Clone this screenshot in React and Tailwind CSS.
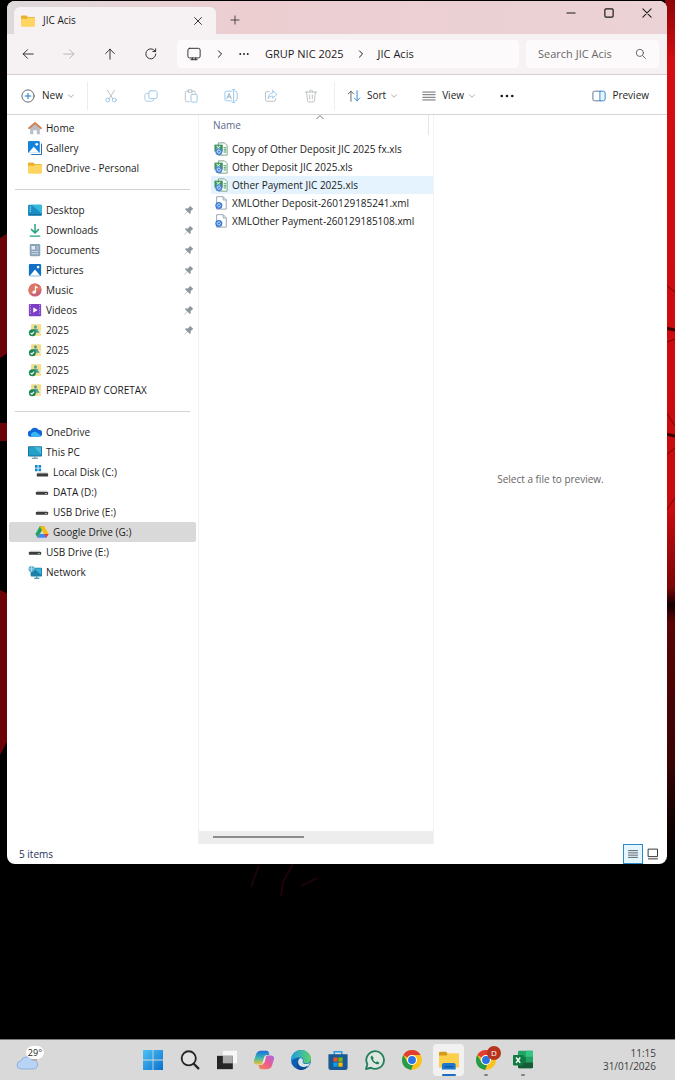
import React, { useState } from "react";

/* ---------- small stroke icons ---------- */

function Stroke({ children, size = "size-3.5", width = "1", className = "" }) {
  return (
    <svg className={`${size} shrink-0 ${className}`} viewBox="0 0 16 16" fill="none" stroke="currentColor" strokeWidth={width} strokeLinecap="round" strokeLinejoin="round">
      {children}
    </svg>
  );
}

const BackIcon = () => <Stroke><path d="M14 8H2.5M7.5 3L2.5 8l5 5" /></Stroke>;
const ForwardIcon = () => <Stroke><path d="M2 8h11.5M8.5 3l5 5-5 5" /></Stroke>;
const UpIcon = () => <Stroke><path d="M8 14V2.5M3 7.5l5-5 5 5" /></Stroke>;
const RefreshIcon = () => <Stroke><path d="M13.5 8A5.7 5.7 0 1 1 11.5 3.5L13 5M13.3 2v3.2h-3.2" /></Stroke>;
const SearchIcon = () => <Stroke size="size-3" width="1.3"><circle cx="6.5" cy="6.5" r="4.8" /><path d="M10.2 10.2L14 14" /></Stroke>;
const CloseIcon = ({ size }) => <Stroke size={size} width="1.4"><path d="M2.5 2.5l11 11M13.5 2.5l-11 11" /></Stroke>;
const PlusIcon = () => <Stroke size="size-2.5" width="1.2"><path d="M8 1.500v13M1.500 8h13" /></Stroke>;
const MinimizeIcon = () => <Stroke size="size-3" width="1.4"><path d="M2.5 8h11" /></Stroke>;
const MaximizeIcon = () => <Stroke size="size-3" width="1.6"><rect x="2.5" y="2.5" width="11" height="11" rx="1.5" /></Stroke>;
const ChevronRight = () => <Stroke size="size-2.5" width="1.6"><path d="M5.5 3l5 5-5 5" /></Stroke>;
const ChevronDown = () => <Stroke size="size-2" width="1.6" className="text-[#9a9a9a]"><path d="M3 5.5l5 5 5-5" /></Stroke>;
const MonitorIcon = () => <Stroke><rect x="1" y="1.5" width="14" height="11" rx="2" /><path d="M6 12.5v2M10 12.5v2M4.5 14.5h7" /></Stroke>;

function Dots({ size = "size-3.5" }) {
  return (
    <svg className={`${size} shrink-0`} viewBox="0 0 16 16" fill="currentColor">
      <circle cx="2" cy="8" r="1.5" />
      <circle cx="8" cy="8" r="1.5" />
      <circle cx="14" cy="8" r="1.5" />
    </svg>
  );
}

const NewIcon = () => (
  <Stroke>
    <circle cx="8" cy="8" r="7" stroke="#4d5660" />
    <path d="M8 4.8v6.4M4.8 8h6.4" stroke="#1f7fd0" strokeWidth="1.2" />
  </Stroke>
);

const CutIcon = () => (
  <Stroke>
    <path d="M4 1.5l6 9.5M12 1.5L6 11" stroke="#b5b9bd" />
    <circle cx="4.2" cy="12.6" r="2.2" stroke="#8fc1ea" />
    <circle cx="11.8" cy="12.6" r="2.2" stroke="#8fc1ea" />
  </Stroke>
);

const CopyIcon = () => (
  <Stroke>
    <rect x="5.5" y="2" width="9.5" height="9" rx="2" stroke="#8fc1ea" />
    <path d="M5.5 5H3a2 2 0 0 0-2 2v5a2 2 0 0 0 2 2h6a2 2 0 0 0 2-2v-1" stroke="#a9c3da" />
  </Stroke>
);

const PasteIcon = () => (
  <Stroke>
    <path d="M6 14.5H3A1.5 1.5 0 0 1 1.5 13V4A1.5 1.5 0 0 1 3 2.5h2M9 2.5h2.5A1.5 1.5 0 0 1 13 4v1M5 1h4.2v2.800H5z" stroke="#b5b9bd" />
    <rect x="8" y="6" width="7" height="9" rx="1.3" stroke="#8fc1ea" />
  </Stroke>
);

const RenameIcon = () => (
  <Stroke>
    <path d="M9 2.5H3a2 2 0 0 0-2 2v7a2 2 0 0 0 2 2h6M13 2.5a2 2 0 0 1 2 2v7a2 2 0 0 1-2 2" stroke="#8fc1ea" />
    <path d="M11 1v14M9.5 .8h3M9.5 15.2h3" stroke="#8fc1ea" />
    <path d="M3.3 11L5.800 5l2.5 6M4.2 9h3.2" stroke="#8fa9c0" />
  </Stroke>
);

const ShareIcon = () => (
  <Stroke>
    <path d="M6 3H3.5A1.8 1.8 0 0 0 1.7 4.8v7.4A1.8 1.8 0 0 0 3.5 14h8a1.8 1.8 0 0 0 1.8-1.8V11" stroke="#b5b9bd" />
    <path d="M10 1.8l4.8 4.4L10 10.5V8C7.5 8 5.8 9 4.8 11c0-3.5 2-6.5 5.2-6.7z" stroke="#8fc1ea" />
  </Stroke>
);

const TrashIcon = () => (
  <Stroke className="text-[#b5b9bd]">
    <path d="M1.5 3.5h13M6 3.2a2 2 0 0 1 4 0M3 3.5l1 10a1.5 1.5 0 0 0 1.5 1.3h5A1.5 1.5 0 0 0 12 13.5l1-10M6.5 6.8v4.7M9.5 6.8v4.7" />
  </Stroke>
);

const SortIcon = () => (
  <Stroke>
    <path d="M4.5 14V2.5M1.3 5.7l3.2-3.2 3.2 3.2" stroke="#4d5660" />
    <path d="M11.5 2v11.5M8.3 10.3l3.2 3.2 3.2-3.2" stroke="#1f7fd0" />
  </Stroke>
);

const ViewIcon = () => <Stroke><path d="M1 3.5h14M1 6.5h14M1 9.5h14M1 12.5h14" stroke="#555" /></Stroke>;

const PreviewIcon = () => (
  <Stroke>
    <path d="M9.5 2.5H3a2 2 0 0 0-2 2v7a2 2 0 0 0 2 2h6.5" stroke="#4d6f8c" />
    <path d="M9.5 2.5H13a2 2 0 0 1 2 2v7a2 2 0 0 1-2 2H9.5z" stroke="#1f7fd0" fill="#eaf6ff" />
  </Stroke>
);

/* ---------- coloured sidebar icons ---------- */

function Glyph({ children, size = "size-3.5" }) {
  return <svg className={`${size} shrink-0`} viewBox="0 0 16 16">{children}</svg>;
}

const FolderIcon = () => (
  <Glyph>
    <path d="M0 3a1.3 1.3 0 0 1 1.3-1.3H6L7.800 3.5h6.9A1.3 1.3 0 0 1 16 4.800V8H0z" fill="#e8b02c" />
    <path d="M0 5.500h6.500L8 4.300h6.700A1.3 1.3 0 0 1 16 5.600v7.600a1.3 1.3 0 0 1-1.3 1.3H1.3A1.3 1.3 0 0 1 0 13.200z" fill="#ffd561" />
  </Glyph>
);

const HomeIcon = () => (
  <Glyph>
    <path d="M2.5 7L8 2.5 13.5 7v8H10v-4.5H6V15H2.5z" fill="#b9bec6" />
    <path d="M1.200 8.2L8 2.2l6.800 6" fill="none" stroke="#cf8458" strokeWidth="2.2" strokeLinecap="round" strokeLinejoin="round" />
  </Glyph>
);

const GalleryIcon = () => (
  <Glyph>
    <path d="M3 3h12.5v12.5H3z" fill="#0a4f92" />
    <path d="M2 2h13v13H2z" fill="#fff" />
    <path d="M4 15.500h11.500V3" fill="none" stroke="#0f62ad" />
    <rect width="13.500" height="13.500" rx="1" fill="#1683da" />
    <path d="M.5 13.500l6-7 6.500 7z" fill="#fff" />
    <circle cx="10" cy="3.8" r="1.5" fill="#fff" />
  </Glyph>
);

const PicturesIcon = () => (
  <Glyph>
    <rect x="1" y="1" width="14" height="14" rx="1.3" fill="#1270c4" />
    <path d="M2 14.5l6-7 6 7z" fill="#fff" />
    <circle cx="11.5" cy="4.7" r="1.5" fill="#fff" />
  </Glyph>
);

const DesktopIcon = () => (
  <Glyph>
    <rect y="2" width="16" height="12.5" rx="1.3" fill="#1b8fc4" />
    <path d="M4 2h10.7A1.3 1.3 0 0 1 16 3.3v9z" fill="#37b9dc" />
    <path d="M2 4.5h1.5M2 7h1.5M2 9.5h1.5" stroke="#d5f4ff" strokeWidth="1" />
    <path d="M0 13.500h16" stroke="#12618f" />
  </Glyph>
);

const DownloadsIcon = () => (
  <Glyph><path d="M8 1v10M3.5 7L8 11.3 12.5 7M2 15h12" fill="none" stroke="#22a37b" strokeWidth="1.7" /></Glyph>
);

const DocumentsIcon = () => (
  <Glyph>
    <rect x="2" y="1" width="12" height="14" rx="1.3" fill="#8ba3b9" />
    <rect x="4" y="3.5" width="4" height="4" fill="#e7eff6" />
    <path d="M9.5 4.5H12M9.5 7H12M4 9.8h8M4 12.3h8" stroke="#d5e1ec" />
  </Glyph>
);

const MusicIcon = () => (
  <Glyph>
    <circle cx="8" cy="8" r="7.5" fill="#c96278" />
    <path d="M8 .5A7.5 7.5 0 0 1 15.500 8L3 13.5A7.5 7.5 0 0 1 8 .5z" fill="#dc7768" />
    <path d="M8.5 10.5V4l2.5 1.8" fill="none" stroke="#fff" strokeWidth="1.3" />
    <circle cx="7" cy="10.5" r="1.9" fill="#fff" />
  </Glyph>
);

const VideosIcon = () => (
  <Glyph>
    <rect x="1" y="1" width="14" height="14" rx="1" fill="#7b3fc4" />
    <path d="M2.7 2v12M13.3 2v12" stroke="#c79af5" strokeWidth="1.3" strokeDasharray="1.5 1.5" />
    <path d="M6 5l5 3-5 3z" fill="#fff" />
  </Glyph>
);

const SyncedFolderIcon = () => (
  <Glyph>
    <rect x="3.5" y="1.5" width="11.5" height="13" rx="1" fill="#f3dd8a" />
    <rect x="11" y="8" width="4" height="4.5" fill="#f7ecb8" />
    <circle cx="8.5" cy="4.5" r="1.7" fill="#4f9f9a" />
    <path d="M5.5 9c.5-3.500 5.500-3.500 6.500 0l1.5 2H8z" fill="#529f9b" />
    <circle cx="5" cy="11.2" r="4" fill="#188552" />
    <path d="M3 11.2l1.5 1.5L7 9.8" fill="none" stroke="#fff" strokeWidth="1.2" />
  </Glyph>
);

const OneDriveIcon = () => (
  <Glyph>
    <path d="M3.5 13.500A3.600 3.600 0 0 1 3 6.300 5 5 0 0 1 12 5.5a4 4 0 0 1 .5 8z" fill="#1068d6" />
    <path d="M4.500 13.500a3 3 0 0 1 .5-5c2-1.300 4-1 5.500.3L15 12.500c-.6.700-1.500 1-2.500 1z" fill="#38b6f5" />
  </Glyph>
);

const ThisPcIcon = () => (
  <Glyph>
    <rect y="1.5" width="16" height="11.5" rx="1" fill="#176f99" />
    <path d="M1 2.5h14V12H1z" fill="#25a0c8" />
    <path d="M7 2.5h8v8z" fill="#43bddd" />
    <path d="M8 13v2M4.5 15.200h7" stroke="#6c8494" strokeWidth="1.2" />
  </Glyph>
);

const DriveIcon = () => (
  <Glyph>
    <path d="M2.5 6.500h11L15 8.500H1z" fill="#c4c4c4" />
    <rect x="1" y="8" width="14" height="3.2" rx=".5" fill="#3d3d3d" />
    <rect x="11.5" y="9.2" width="2" height="1" fill="#9fe3a5" />
  </Glyph>
);

const SystemDriveIcon = () => (
  <Glyph>
    <path d="M0 0h3v3H0zM4 0h3v3H4zM0 4h3v3H0zM4 4h3v3H4z" fill="#1288cf" />
    <path d="M3 8.500h11l1 1.800H2z" fill="#c4c4c4" />
    <rect x="2" y="9.800" width="13" height="3.2" rx=".5" fill="#3d3d3d" />
  </Glyph>
);

const GoogleDriveIcon = () => (
  <Glyph>
    <path d="M5.5 1.5h5L8 6z" fill="#188038" />
    <path d="M5.5 1.500L8 6l-5 8.500L.5 10.300z" fill="#1ea362" />
    <path d="M5.5 1.5h5l5 8.800h-5z" fill="#fbbc04" />
    <path d="M3 14.500l2.5-4.200h10L13 14.500z" fill="#4285f4" />
    <path d="M10.5 10.300h5L13 14.500z" fill="#ea4335" />
  </Glyph>
);

const NetworkIcon = () => (
  <Glyph>
    <rect x="3" y="3" width="13" height="10" rx="1" fill="#1b7fa9" />
    <path d="M7 4h8v7z" fill="#39b3d8" />
    <circle cx="4" cy="4.5" r="3.5" fill="#5aaed0" />
    <path d="M.5 4.500h7M4 1v7" stroke="#c9edf8" strokeWidth=".7" />
    <path d="M10 13v2M7 15.200h6" stroke="#1b7fa9" strokeWidth="1.2" />
  </Glyph>
);

const PinIcon = () => (
  <svg className="size-2.5 shrink-0" viewBox="0 0 16 16" fill="#8e979c">
    <path d="M9.500 1L15 6.500l-1.800.7-2.600 2.600.2 3.200-1.400 1.400-3.700-3.700L1 15.500.500 15l4.800-4.700-3.700-3.700L3 5.200l3.200.2L8.800 2.800z" />
  </svg>
);

const XlsIcon = () => (
  <Glyph>
    <path d="M5 1h7l3 3v11H5z" fill="#fff" stroke="#6d9c7c" />
    <path d="M11 6.500h3M11 9h3M11 11.500h3" stroke="#3d9b58" strokeWidth="1.2" />
    <rect x=".5" y="3" width="9.5" height="8" fill="#3c9560" />
    <path d="M3 4.500l4 4M7 4.500l-4 4" stroke="#d6f3de" strokeWidth="1.2" />
    <circle cx="5.500" cy="11" r="4" fill="#4a86d4" />
    <path d="M3.500 11.200A2 2 0 0 1 7 10M7.500 10.800A2 2 0 0 1 4 12" stroke="#fff" fill="none" />
  </Glyph>
);

const XmlIcon = () => (
  <Glyph>
    <path d="M3 .8h7.5L14 4.300V15H3z" fill="#fff" stroke="#8f9caf" />
    <path d="M10.5 1v3.500H14" fill="none" stroke="#8f9caf" />
    <circle cx="5.5" cy="10.800" r="4" fill="#3a7bd5" />
    <path d="M3.500 11A2 2 0 0 1 7 9.800M7.500 10.600A2 2 0 0 1 4 11.800" stroke="#fff" fill="none" />
  </Glyph>
);

/* ---------- taskbar icons ---------- */

function AppIcon({ children }) {
  return <svg className="size-5" viewBox="0 0 24 24">{children}</svg>;
}

const StartIcon = () => (
  <AppIcon>
    <defs>
      <linearGradient id="start" x1="0" y1="0" x2="1" y2="1">
        <stop offset="0" stopColor="#4cc3f5" />
        <stop offset="1" stopColor="#0a6fd0" />
      </linearGradient>
    </defs>
    <path d="M0 0h11.500v11.500H0zM12.500 0H24v11.500H12.500zM0 12.500h11.500V24H0zM12.500 12.500H24V24H12.500z" fill="url(#start)" />
  </AppIcon>
);

const TaskSearchIcon = () => (
  <AppIcon>
    <circle cx="10.5" cy="10" r="8.500" fill="#e2e2e2" stroke="#262626" strokeWidth="2.200" />
    <path d="M16.500 16.500l5.500 5.500" stroke="#262626" strokeWidth="2.8" strokeLinecap="round" />
  </AppIcon>
);

const TaskViewIcon = () => (
  <AppIcon>
    <rect x="7" y="1" width="17" height="15" fill="#f7f7f7" />
    <rect y="7" width="19" height="16" fill="#252525" />
    <path d="M7 7h12v9H7z" fill="#ababab" />
  </AppIcon>
);

const CopilotIcon = () => (
  <AppIcon>
    <defs>
      <linearGradient id="copA" x1="0" y1="0" x2="0" y2="1">
        <stop offset="0" stopColor="#1b6be0" />
        <stop offset=".5" stopColor="#39b7b0" />
        <stop offset="1" stopColor="#f3c32c" />
      </linearGradient>
      <linearGradient id="copB" x1="1" y1="0" x2="0" y2="1">
        <stop offset="0" stopColor="#a56bf0" />
        <stop offset=".5" stopColor="#ee5a8e" />
        <stop offset="1" stopColor="#f58a4b" />
      </linearGradient>
    </defs>
    <path d="M8 1h7c2 0 2.500 1.500 3 3l.5 2h-3c-2 0-3 1-3.500 3L10.500 14.500C10 16.500 9 17.500 7 17.500H4c-3 0-5-2-4-5l2.500-7.500C3.300 2.500 5.500 1 8 1z" fill="url(#copA)" />
    <path d="M16 23H9c-2 0-2.500-1.500-3-3l-.5-2h3c2 0 3-1 3.500-3l1.500-5.500c.5-2 1.500-3 3.500-3h3c3 0 5 2 4 5L21.500 19c-.8 2.500-3 4-5.500 4z" fill="url(#copB)" />
    <path d="M12.700 8.500l-2.200 7h1.800l2.200-7z" fill="#e9e9ee" />
  </AppIcon>
);

const EdgeIcon = () => (
  <AppIcon>
    <defs>
      <linearGradient id="edge" x1="0" y1="0" x2="1" y2="0">
        <stop offset="0" stopColor="#1b9de2" />
        <stop offset="1" stopColor="#5fd26a" />
      </linearGradient>
    </defs>
    <circle cx="12" cy="12" r="12" fill="#0f5fb0" />
    <path d="M0 12C.500 4.500 6 0 12 0c7.500 0 12 5.500 12 10.300 0 3.700-2.700 6-5.800 6-2.700 0-4.200-1-3.700-2 1-1 1-5.300-4-5.300C5 9 .5 12 0 14z" fill="url(#edge)" />
    <path d="M8.500 15c0-3 1.500-5 3-5.500 3 .5 3.500 3.500 2.500 4.500-.5 1.500 1.500 3 4 2.800 1.700 0 3.500-.8 4.700-1.600-.5 1.700-1.200 3-2.200 4.300C16 21.500 8.500 20.500 8.500 15z" fill="#d9e3ea" />
    <path d="M8.500 15c0 4 4 6 7.500 5.500 2.500-.4 4-1.200 5-2.300-2.500 4-6 5.800-9 5.800-6-.5-6-6-3.500-9z" fill="#0c4c94" />
  </AppIcon>
);

const StoreIcon = () => (
  <AppIcon>
    <path d="M7.500 6V2h9v4" fill="none" stroke="#2b9be0" strokeWidth="1.8" />
    <path d="M.5 5h23v16a3 3 0 0 1-3 3h-17a3 3 0 0 1-3-3z" fill="#175a96" />
    <path d="M6.500 9h5v5h-5z" fill="#f25022" />
    <path d="M12.500 9h5v5h-5z" fill="#7fba00" />
    <path d="M6.500 15h5v5h-5z" fill="#00a4ef" />
    <path d="M12.500 15h5v5h-5z" fill="#ffb900" />
  </AppIcon>
);

const WhatsAppIcon = () => (
  <AppIcon>
    <path d="M1.200 22.800l1.600-5.800A10.600 10.600 0 1 1 7 21.300z" fill="#e0e6e2" stroke="#22805a" strokeWidth="2.200" strokeLinejoin="round" />
    <path d="M8.500 6.500c-1.500.5-2 2-1.500 3.500 1 3.500 3.500 6 7 7 1.500.5 3-.3 3.300-1.800l-2.800-1.600-1.300 1.200c-1.700-.6-3-2-3.700-3.600l1-1.300z" fill="#22805a" />
  </AppIcon>
);

const ChromeIcon = () => (
  <AppIcon>
    <circle cx="12" cy="12" r="12" fill="#fbc116" />
    <path d="M12 0a12 12 0 0 1 10.400 6H12a6 6 0 0 0-5.200 3L1.600 6A12 12 0 0 1 12 0z" fill="#df3e30" />
    <path d="M1.600 6l5.200 9a6 6 0 0 0 6.500 2.800L11 24A12 12 0 0 1 1.600 6z" fill="#259b4c" />
    <circle cx="12" cy="12" r="6" fill="#fff" />
    <circle cx="12" cy="12" r="4.700" fill="#2b74e4" />
  </AppIcon>
);

const ExplorerIcon = () => (
  <AppIcon>
    <path d="M0 3.500A1.500 1.500 0 0 1 1.500 2H8.500L10.500 4.500 9.500 9H0z" fill="#d49b1a" />
    <path d="M0 6.500h9l2-2.500h11.500A1.500 1.500 0 0 1 24 5.500V21H0z" fill="#fccf4c" />
    <path d="M3.500 23.500V18A2.500 2.500 0 0 1 6 15.500h11.500A2.500 2.500 0 0 1 20 18v5.500z" fill="#1b78cf" />
    <path d="M6.500 20h10.500" stroke="#0d56a0" strokeWidth="1.5" />
  </AppIcon>
);

const ExcelIcon = () => (
  <AppIcon>
    <rect x="6" y="1" width="18" height="21" rx="1.5" fill="#21a366" />
    <path d="M15.500 1h7A1.500 1.500 0 0 1 24 2.500V8h-8.500z" fill="#33c481" />
    <path d="M6 8h9.500v7H6z" fill="#107c41" />
    <path d="M6 15h18v5.500a1.500 1.500 0 0 1-1.500 1.500h-15A1.500 1.500 0 0 1 6 20.500z" fill="#185c37" />
    <rect y="6" width="12.5" height="12.5" rx="1" fill="#107c41" />
    <path d="M3.700 9l5 6.500M8.700 9l-5 6.500" stroke="#fff" strokeWidth="1.7" />
  </AppIcon>
);

/* ---------- data ---------- */

const sidebar = [
  [
    { label: "Home", Icon: HomeIcon },
    { label: "Gallery", Icon: GalleryIcon },
    { label: "OneDrive - Personal", Icon: FolderIcon },
  ],
  [
    { label: "Desktop", Icon: DesktopIcon, pinned: true },
    { label: "Downloads", Icon: DownloadsIcon, pinned: true },
    { label: "Documents", Icon: DocumentsIcon, pinned: true },
    { label: "Pictures", Icon: PicturesIcon, pinned: true },
    { label: "Music", Icon: MusicIcon, pinned: true },
    { label: "Videos", Icon: VideosIcon, pinned: true },
    { label: "2025", Icon: SyncedFolderIcon, pinned: true },
    { label: "2025", Icon: SyncedFolderIcon },
    { label: "2025", Icon: SyncedFolderIcon },
    { label: "PREPAID BY CORETAX", Icon: SyncedFolderIcon },
  ],
  [
    { label: "OneDrive", Icon: OneDriveIcon },
    { label: "This PC", Icon: ThisPcIcon },
    { label: "Local Disk (C:)", Icon: SystemDriveIcon, nested: true },
    { label: "DATA (D:)", Icon: DriveIcon, nested: true },
    { label: "USB Drive (E:)", Icon: DriveIcon, nested: true },
    { label: "Google Drive (G:)", Icon: GoogleDriveIcon, nested: true, active: true },
    { label: "USB Drive (E:)", Icon: DriveIcon },
    { label: "Network", Icon: NetworkIcon },
  ],
];

const files = [
  { name: "Copy of Other Deposit JIC 2025 fx.xls", Icon: XlsIcon },
  { name: "Other Deposit JIC 2025.xls", Icon: XlsIcon },
  { name: "Other Payment JIC 2025.xls", Icon: XlsIcon },
  { name: "XMLOther Deposit-260129185241.xml", Icon: XmlIcon },
  { name: "XMLOther Payment-260129185108.xml", Icon: XmlIcon },
];

const fileActions = [
  { label: "Cut", Icon: CutIcon },
  { label: "Copy", Icon: CopyIcon },
  { label: "Paste", Icon: PasteIcon },
  { label: "Rename", Icon: RenameIcon },
  { label: "Share", Icon: ShareIcon },
  { label: "Delete", Icon: TrashIcon },
];

const taskbarApps = [
  { label: "Start", Icon: StartIcon },
  { label: "Search", Icon: TaskSearchIcon },
  { label: "Task view", Icon: TaskViewIcon },
  { label: "Copilot", Icon: CopilotIcon },
  { label: "Edge", Icon: EdgeIcon },
  { label: "Store", Icon: StoreIcon },
  { label: "WhatsApp", Icon: WhatsAppIcon },
  { label: "Chrome", Icon: ChromeIcon },
  { label: "File Explorer", Icon: ExplorerIcon, active: true },
  { label: "Chrome profile", Icon: ChromeIcon, running: true, badge: "D" },
  { label: "Excel", Icon: ExcelIcon, running: true },
];

/* ---------- sections ---------- */

function Wallpaper() {
  return (
    <div className="absolute inset-0 overflow-hidden" aria-hidden="true">
      <svg className="absolute left-0 top-0" width="8" height="864" fill="#6c0407">
        <path d="M0 238l8-5v120l-8 5zM0 423h8v18H0zM0 590l8 4v76l-8-6zM0 664h8v76l-8 15z" />
      </svg>
      <svg className="absolute right-0 top-0" width="10" height="864">
        <defs>
          <linearGradient id="glow" x1="0" y1="0" x2="0" y2="1">
            <stop offset="0" stopColor="#8c0508" />
            <stop offset=".07" stopColor="#d40d10" />
            <stop offset=".59" stopColor="#c80b0d" />
            <stop offset=".68" stopColor="#7a0507" />
            <stop offset=".7" stopColor="#160001" />
            <stop offset=".72" stopColor="#5a0305" />
            <stop offset=".88" stopColor="#3a0304" />
            <stop offset=".95" stopColor="#120101" />
            <stop offset="1" stopColor="#000" />
          </linearGradient>
        </defs>
        <rect width="10" height="864" fill="url(#glow)" />
        <path d="M0 284l10 8M0 343l10-4M0 410l10 16M0 456l10-8M0 512l10-14" stroke="#7a0406" />
        <path d="M0 328l10 2M0 434l10 2" stroke="#3a0102" strokeWidth="3" />
      </svg>
      <svg className="absolute left-[225px] top-[864px]" width="100" height="34" stroke="#1c0407" fill="none" strokeWidth="2">
        <path d="M34 1l-8 22M68 0l-10 18-2 14M92 14l-16 8" />
      </svg>
    </div>
  );
}

function TitleBar() {
  return (
    <header className="flex h-[33px] items-end bg-linear-to-r from-[#ded9db] via-[#ecced1] via-35% to-[#ebd2d5] pl-[7px]">
      <div className="flex h-[27px] w-[202px] items-center rounded-t-md bg-[#f6f2f3] pl-[7px] pr-[13px]">
        <FolderIcon />
        <span className="ml-2 flex-1 text-[10px]">JIC Acis</span>
        <button aria-label="Close tab"><CloseIcon size="size-2.5" /></button>
      </div>
      <button aria-label="New tab" className="flex h-7 w-[38px] items-center justify-center"><PlusIcon /></button>
      <div className="ml-auto mr-px flex h-full items-start">
        <button aria-label="Minimize" className="flex h-6 w-[38px] items-center justify-center"><MinimizeIcon /></button>
        <button aria-label="Maximize" className="flex h-6 w-[38px] items-center justify-center"><MaximizeIcon /></button>
        <button aria-label="Close" className="flex h-6 w-[38px] items-center justify-center"><CloseIcon size="size-3" /></button>
      </div>
    </header>
  );
}

function AddressBar() {
  return (
    <div className="flex h-[41px] items-center border-b border-[#d6cdcf] bg-[#f6f1f2] pr-2 text-[11px]">
      <div className="flex">
        <button aria-label="Back" className="flex h-7 w-[41px] items-center justify-center"><BackIcon /></button>
        <button aria-label="Forward" className="flex h-7 w-[41px] items-center justify-center text-[#b3aeb0]"><ForwardIcon /></button>
        <button aria-label="Up" className="flex h-7 w-[41px] items-center justify-center"><UpIcon /></button>
        <button aria-label="Refresh" className="flex h-7 w-[41px] items-center justify-center"><RefreshIcon /></button>
      </div>
      <nav aria-label="Path" className="ml-1.5 flex h-7 flex-1 items-center rounded bg-[#fdfafb] pl-2.5">
        <MonitorIcon />
        <span className="ml-3.5"><ChevronRight /></span>
        <button aria-label="More folders" className="ml-3.5"><Dots size="size-2.5" /></button>
        <a href="#grup" className="ml-4 whitespace-nowrap">GRUP NIC 2025</a>
        <span className="ml-3"><ChevronRight /></span>
        <a href="#acis" className="ml-3 whitespace-nowrap">JIC Acis</a>
      </nav>
      <label className="ml-[7px] flex h-7 w-[133px] items-center rounded bg-[#fdfafb] pl-3 pr-3 text-[#6a6667]">
        <input type="search" aria-label="Search JIC Acis" placeholder="Search JIC Acis" className="w-0 flex-1 bg-transparent outline-none placeholder:text-[#6a6667]" />
        <SearchIcon />
      </label>
    </div>
  );
}

function Toolbar() {
  return (
    <div className="flex h-10 items-center border-b border-[#d9d3d4] pt-0.5 text-[10px]">
      <button className="flex h-7 w-20 items-center pl-3.5">
        <NewIcon />
        <span className="ml-[7px] mr-1">New</span>
        <ChevronDown />
      </button>
      <div className="flex border-x border-[#ededed] px-[3px]">
        {fileActions.map(({ label, Icon }) => (
          <button key={label} aria-label={label} disabled className="flex h-7 w-10 items-center justify-center">
            <Icon />
          </button>
        ))}
      </div>
      <button className="flex h-7 items-center pl-3">
        <SortIcon />
        <span className="ml-1.5 mr-1">Sort</span>
        <ChevronDown />
      </button>
      <button className="ml-6 flex h-7 items-center">
        <ViewIcon />
        <span className="ml-1.5 mr-1">View</span>
        <ChevronDown />
      </button>
      <button aria-label="See more" className="ml-6"><Dots /></button>
      <button className="ml-auto mr-[18px] flex h-7 items-center gap-1.5">
        <PreviewIcon />
        Preview
      </button>
    </div>
  );
}

function Sidebar() {
  return (
    <nav aria-label="Folders" className="w-48 shrink-0 border-r border-[#f1f1f1] pt-[3px] text-[10px]">
      {sidebar.map((group, index) => (
        <React.Fragment key={index}>
          {index > 0 && (
            <div className="flex h-[22px] items-center px-2">
              <hr className="w-full border-[#d2d2d2]" />
            </div>
          )}
          <ul>
            {group.map(({ label, Icon, pinned, nested, active }, i) => (
              <li key={i} className="px-0.5">
                <button className={`flex h-5 w-full items-center gap-1 rounded-xs pr-0.5 text-left ${nested ? "pl-[26px]" : "pl-[19px]"} ${active ? "bg-[#d9d9d9]" : ""}`}>
                  <Icon />
                  <span className="flex-1 whitespace-nowrap">{label}</span>
                  {pinned && <PinIcon />}
                </button>
              </li>
            ))}
          </ul>
        </React.Fragment>
      ))}
    </nav>
  );
}

function FileList() {
  const [selected, setSelected] = useState(2);

  return (
    <section className="flex w-[234px] shrink-0 flex-col text-[10px]">
      <table className="w-full border-collapse">
        <thead>
          <tr>
            <th className="relative h-[25px] p-0 pb-1 pl-3.5 text-left font-normal text-[#5d6988]">
              Name
              <svg className="absolute left-1/2 top-0 h-1 w-2" viewBox="0 0 8 4" fill="none" stroke="#777"><path d="M.5 4L4 .5 7.500 4" /></svg>
              <span className="absolute right-1 top-0 h-5 w-px bg-[#e5e5e5]" />
            </th>
          </tr>
        </thead>
        <tbody>
          {files.map(({ name, Icon }, i) => (
            <tr key={name} onClick={() => setSelected(i)}>
              <td className="p-0 pl-3">
                <button className={`flex h-[18px] w-full items-center gap-1 pl-[3px] text-left whitespace-nowrap ${i === selected ? "bg-[#e5f3fe]" : ""}`}>
                  <Icon />
                  {name}
                </button>
              </td>
            </tr>
          ))}
        </tbody>
      </table>
      <div className="mt-auto h-[13px] bg-[#ededed] pl-3.5 pt-[5px]">
        <div className="h-0.5 w-[91px] bg-[#8b8b8b]" />
      </div>
    </section>
  );
}

function StatusBar() {
  return (
    <footer className="flex h-5 items-center pl-3 pr-2 text-[10px] text-[#22335c]">
      <span>5 items</span>
      <button aria-label="Details view" className="ml-auto flex size-5 items-center justify-center border border-[#2c8ac8] bg-[#e3f5ff] text-[#333]">
        <Stroke size="size-3"><path d="M2 3.500h12M2 6.500h12M2 9.500h12M2 12.500h12" /></Stroke>
      </button>
      <button aria-label="Large icons view" className="ml-1 text-[#333]">
        <Stroke size="size-3" width="1.3"><rect x="2" y="1.500" width="12" height="10" /><path d="M2 14.500h12" /></Stroke>
      </button>
    </footer>
  );
}

function Taskbar() {
  return (
    <footer className="relative grid h-[41px] grid-cols-[1fr_auto_1fr] items-center border-t border-[#7b7b7b] bg-[#d9d9d9]">
      <button aria-label="Weather" className="relative ml-4 h-8 w-7 justify-self-start">
        <svg className="size-full" viewBox="0 0 28 32">
          <circle cx="17" cy="14" r="4.500" fill="#d9a07a" />
          <path d="M5 25a4 4 0 0 1 0-8 6 6 0 0 1 11-1 4.600 4.600 0 0 1 2 9z" fill="#b9d3f5" stroke="#8fb0dd" />
        </svg>
        <span className="absolute right-0 top-0.5 rounded-full bg-white px-0.5 text-[9px] leading-[13px]">29°</span>
      </button>
      <div className="flex">
        {taskbarApps.map(({ label, Icon, active, running, badge }) => (
          <button key={label} aria-label={label} className="flex h-10 w-[37px] items-center justify-center">
            <span className={`relative flex h-8 w-[31px] items-center justify-center rounded ${active ? "bg-[#f1f1f1]" : ""}`}>
              <Icon />
              {active && <span className="absolute bottom-0 h-0.5 w-3.5 rounded bg-[#1e6dc0]" />}
              {running && <span className="absolute bottom-0 h-0.5 w-1 rounded bg-[#808080]" />}
              {badge && (
                <span className="absolute right-0 top-0.5 flex size-3.5 items-center justify-center rounded-full bg-[#b8331d] text-[8px] text-white">{badge}</span>
              )}
            </span>
          </button>
        ))}
      </div>
      <div className="mr-[19px] text-right text-[10px] leading-[13px] text-[#3c3c3c]">
        <div>11:15</div>
        <div>31/01/2026</div>
      </div>
    </footer>
  );
}

export default function App() {
  return (
    <div className="relative flex min-h-screen flex-col bg-black font-['Open_Sans','Noto_Sans',sans-serif] text-[#1b1b1b]">
      <Wallpaper />
      <main className="relative mb-[175px] ml-[7px] mr-2 mt-px flex flex-1 flex-col overflow-hidden rounded-lg bg-white">
        <TitleBar />
        <AddressBar />
        <Toolbar />
        <div className="flex flex-1">
          <Sidebar />
          <FileList />
          <section className="flex flex-1 items-center justify-center border-l border-[#f3f3f3] text-[10px] text-[#666]">
            Select a file to preview.
          </section>
        </div>
        <StatusBar />
      </main>
      <Taskbar />
    </div>
  );
}
